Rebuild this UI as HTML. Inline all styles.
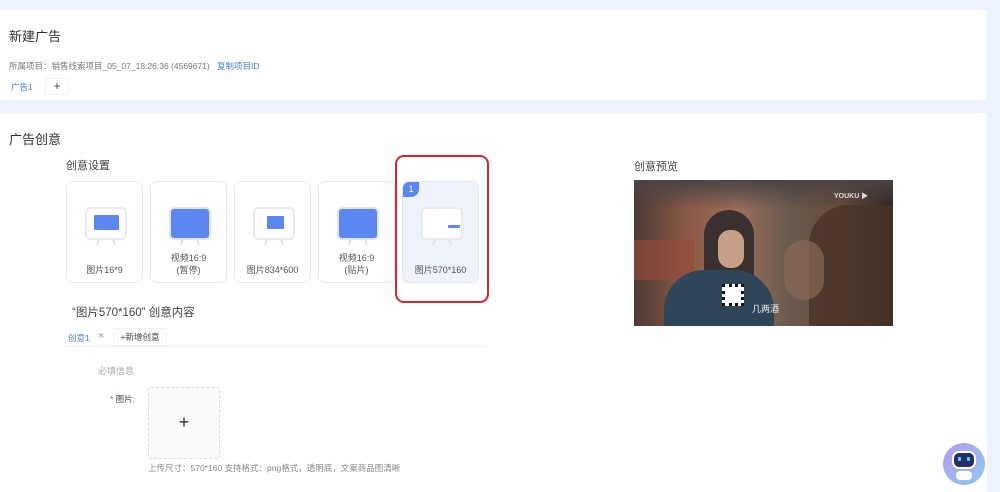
<!DOCTYPE html><html><head><meta charset="utf-8"><style>
*{margin:0;padding:0;box-sizing:border-box}
body{width:1000px;height:492px;overflow:hidden;background:#edf3fc;font-family:"Liberation Sans","Noto Sans CJK SC",sans-serif;position:relative;color:#333}
.a{position:absolute}
.card{background:#fff;left:0;width:987px}
.opt{position:absolute;top:181px;width:77px;height:102px;border:1px solid #e6e8ee;border-radius:7px;background:#fff;font-size:9px;color:#555;text-align:center}
.opt .lb{position:absolute;left:0;right:0;bottom:6px;line-height:12px}
.tv{position:absolute;left:18px;top:25px;width:42px;height:33px;border:2px solid #e8eaee;border-radius:5px;background:#fff}
.tv i{position:absolute;background:#5b88f0;border-radius:1px}
.legs{position:absolute;left:26px;top:57px;width:26px;height:6px}
.legs:before,.legs:after{content:"";position:absolute;top:0;width:2px;height:6px;background:#e0e2e8}
.legs:before{left:4px;transform:rotate(20deg)}.legs:after{right:4px;transform:rotate(-20deg)}
</style></head><body>
<div class="a card" style="top:10px;height:90px"></div>
<div class="a card" style="top:113px;height:379px"></div>
<div class="a" style="left:9px;top:26px;font-size:13px;color:#333">新建广告</div>
<div class="a" style="left:9px;top:60px;font-size:8.5px;color:#777">所属项目：销售线索项目_05_07_18:26:36 (4569671)</div>
<div class="a" style="left:217px;top:60px;font-size:8.5px;color:#4a7fd6">复制项目ID</div>
<div class="a" style="left:11px;top:81px;font-size:8.5px;color:#4a7fd6">广告1</div>
<div class="a" style="left:45px;top:78px;width:24px;height:17px;border:1px solid #f3f3f3;font-size:12px;text-align:center;line-height:15px;color:#444">+</div>
<div class="a" style="left:9px;top:129px;font-size:13px">广告创意</div>
<div class="a" style="left:66px;top:157px;font-size:11px;color:#444">创意设置</div>
<div class="opt" style="left:66px"><div class="tv"><i style="left:7px;top:6px;width:25px;height:15px"></i></div><div class="legs"></div><div class="lb">图片16*9</div></div>
<div class="opt" style="left:150px"><div class="tv" style="border-color:#e0e3ea"><i style="left:0;top:0;width:38px;height:29px;border-radius:3px"></i></div><div class="legs"></div><div class="lb">视频16:9<br>(暂停)</div></div>
<div class="opt" style="left:234px"><div class="tv"><i style="left:12px;top:7px;width:17px;height:13px"></i></div><div class="legs"></div><div class="lb">图片834*600</div></div>
<div class="opt" style="left:318px"><div class="tv" style="border-color:#e0e3ea"><i style="left:0;top:0;width:38px;height:29px;border-radius:3px"></i></div><div class="legs"></div><div class="lb">视频16:9<br>(贴片)</div></div>
<div class="opt" style="left:402px;background:#eef2fb;border-color:#e0e6f2"><div class="a" style="left:0;top:0;width:16px;height:15px;background:#5b88f0;border-radius:6px 0 8px 0;color:#fff;font-size:9px;line-height:15px">1</div><div class="tv"><i style="left:25px;top:16px;width:12px;height:3px"></i></div><div class="legs"></div><div class="lb">图片570*160</div></div>
<div class="a" style="left:395px;top:155px;width:94px;height:148px;border:2.5px solid #d9252c;border-radius:9px"></div>
<div class="a" style="left:72px;top:304px;font-size:11.5px;color:#444">“图片570*160” 创意内容</div>
<div class="a" style="left:68px;top:332px;font-size:8.5px;color:#4a7fd6">创意1</div>
<div class="a" style="left:98px;top:330px;font-size:11px;color:#999">×</div>
<div class="a" style="left:113px;top:328px;width:54px;height:18px;border:1px solid #f0f0f0;font-size:8.5px;line-height:16px;text-align:center;color:#444">+新增创意</div>
<div class="a" style="left:66px;top:346px;width:421px;height:1px;background:#eee"></div>
<div class="a" style="left:98px;top:364px;font-size:9px;color:#aaa">必填信息</div>
<div class="a" style="left:110px;top:393px;font-size:8.5px;color:#444"><span style="color:#e05050">*</span> 图片:</div>
<div class="a" style="left:148px;top:387px;width:72px;height:72px;border:1px dashed #ddd;border-radius:3px;background:#fafafa;text-align:center;line-height:68px;font-size:18px;color:#333;font-weight:300">+</div>
<div class="a" style="left:148px;top:462px;font-size:8.5px;color:#888">上传尺寸：570*160 支持格式：png格式，透明底，文案商品图清晰</div>
<div class="a" style="left:634px;top:158px;font-size:11px;color:#444">创意预览</div>
<div class="a" style="left:634px;top:180px;width:259px;height:146px;overflow:hidden;background:linear-gradient(90deg,#4a3a36 0%,#8a5a44 20%,#9a7058 40%,#6a5a4e 60%,#6a4a38 80%,#2a2020 100%)">
<div class="a" style="left:0;top:0;width:259px;height:30px;background:linear-gradient(180deg,#4a4444,rgba(0,0,0,0))"></div>
<div class="a" style="left:0;top:60px;width:60px;height:40px;background:#9a4a3a;opacity:.6"></div>
<div class="a" style="left:70px;top:30px;width:50px;height:80px;background:#3a3030;border-radius:25px 25px 0 0"></div>
<div class="a" style="left:84px;top:50px;width:26px;height:38px;background:#c8a088;border-radius:12px"></div>
<div class="a" style="left:30px;top:90px;width:110px;height:56px;background:#2e4658;border-radius:40px 40px 0 0"></div>
<div class="a" style="left:175px;top:25px;width:84px;height:121px;background:#4a3428;border-radius:40px 0 0 0;opacity:.85"></div>
<div class="a" style="left:150px;top:60px;width:40px;height:60px;background:#8a6a58;border-radius:20px;opacity:.7"></div>
<div class="a" style="left:88px;top:104px;width:22px;height:22px;background:#fff;border:3px dotted #111"></div>
<div class="a" style="left:118px;top:122px;font-size:9px;color:#eee">几两酒</div>
<div class="a" style="left:200px;top:11px;font-size:7px;color:#ddd;font-weight:bold">YOUKU ▶</div>
</div>
<div class="a" style="left:943px;top:443px;width:42px;height:42px;border-radius:50%;background:linear-gradient(135deg,#b49cf0,#8ec8f0)"></div>
<div class="a" style="left:952px;top:451px;width:24px;height:18px;border-radius:7px;background:#2b2d6a;border:2px solid #fff"></div>
<div class="a" style="left:958px;top:457px;width:3px;height:4px;background:#3ae0f0;border-radius:1px"></div>
<div class="a" style="left:967px;top:457px;width:3px;height:4px;background:#3ae0f0;border-radius:1px"></div>
<div class="a" style="left:956px;top:471px;width:16px;height:9px;border-radius:4px;background:#fff"></div>
</body></html>
